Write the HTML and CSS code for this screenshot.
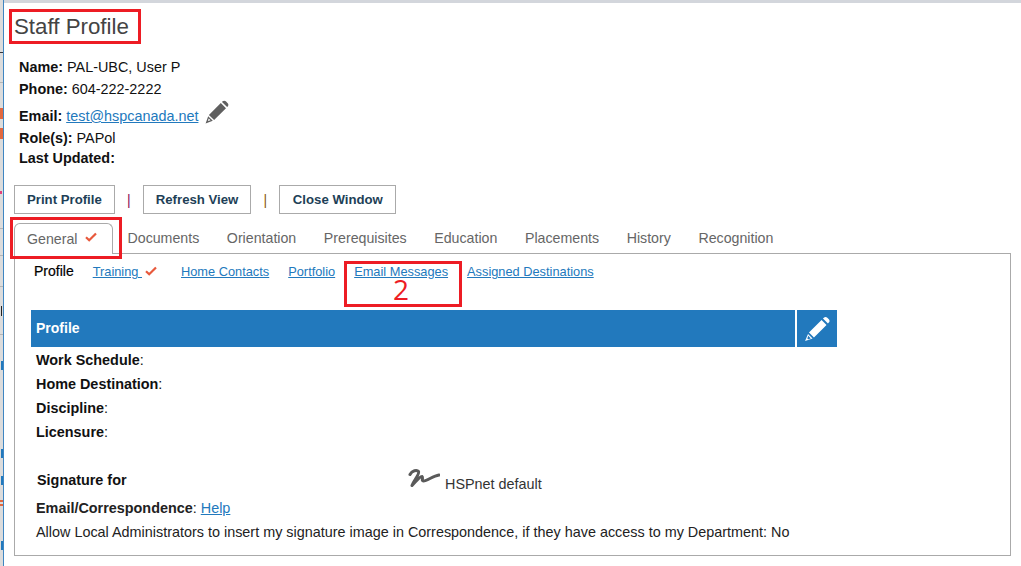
FILE: index.html
```html
<!DOCTYPE html>
<html lang="en">
<head>
<meta charset="utf-8">
<title>Staff Profile</title>
<link rel="stylesheet" href="styles.css">
</head>
<body>
<div class="desktop">
  <div class="backdrop"></div>
  <main class="window">
    <h1 class="title">Staff Profile</h1>
    <div class="info">
      <p class="info-line name"><b>Name:</b> PAL-UBC, User P</p>
      <p class="info-line phone"><b>Phone:</b> 604-222-2222</p>
      <p class="info-line email"><b>Email:</b> <a href="#">test@hspcanada.net</a>
        <svg class="edit-dark" viewBox="0 0 24 24"><path fill="#5f5f5f" fill-rule="evenodd" d="M3.900 14.900 15.800 3l5.200 5.200L9.100 20.100zM3.200 16.200l4.600 4.600L.6 23.400zM3.700 18.400l-.8 2.700.0 .0 2.700-.8zM17 1.900l.6-.6c.9-.9 2.300-.9 3.200 0l1.900 1.900c.9.9.9 2.300 0 3.200l-.6.6z"/></svg>
      </p>
      <p class="info-line role"><b>Role(s):</b> PAPol</p>
      <p class="info-line updated"><b>Last Updated:</b></p>
    </div>
    <div class="actions">
      <button class="btn">Print Profile</button><span class="sep sep-a">|</span>
      <button class="btn">Refresh View</button><span class="sep sep-b">|</span>
      <button class="btn btn-close">Close Window</button>
    </div>
    <nav class="tabs">
      <a class="tab active" href="#">General <svg class="check" viewBox="0 0 12 10"><path d="M1 5.200 4.200 8.300 11 1.500" fill="none" stroke="#e8593c" stroke-width="2.200"/></svg></a>
      <a class="tab" href="#">Documents</a>
      <a class="tab" href="#">Orientation</a>
      <a class="tab" href="#">Prerequisites</a>
      <a class="tab" href="#">Education</a>
      <a class="tab" href="#">Placements</a>
      <a class="tab" href="#">History</a>
      <a class="tab" href="#">Recognition</a>
    </nav>
    <section class="panel">
      <nav class="subnav">
        <span class="sub current">Profile</span>
        <span class="sub training"><a href="#">Training&nbsp;</a><svg class="check" viewBox="0 0 12 10"><path d="M1 5.200 4.200 8.300 11 1.500" fill="none" stroke="#e8593c" stroke-width="2.200"/></svg></span>
        <a class="sub" href="#">Home Contacts</a>
        <a class="sub" href="#">Portfolio</a>
        <a class="sub" href="#">Email Messages</a>
        <a class="sub" href="#">Assigned Destinations</a>
      </nav>
      <div class="bar">
        <div class="bar-title">Profile</div>
        <div class="bar-edit">
          <svg class="edit-light" viewBox="0 0 24 24"><path fill="#fff" fill-rule="evenodd" d="M4.600 15.200 16.200 3.600l4.600 4.600L9.200 19.800zM3.700 16.500l4.200 4.200L1 23zM3.900 18.300l-.8 2.500.7.700 2.500-.8zM17.500 2.300l.8-.8c.9-.9 2.300-.9 3.200 0l1.400 1.400c.9.9.9 2.300 0 3.200l-.8.8z"/></svg>
        </div>
      </div>
      <dl class="fields">
        <div class="field"><b>Work Schedule</b>:</div>
        <div class="field"><b>Home Destination</b>:</div>
        <div class="field"><b>Discipline</b>:</div>
        <div class="field"><b>Licensure</b>:</div>
      </dl>
      <div class="signature">
        <b class="sig-label">Signature for</b>
        <div class="sig-value">
          <svg class="sig-mark" viewBox="0 0 32 20"><path d="M2 6.500C4 2.500 9 1.500 10.500 3.500 12 6 5.500 13 4 17.500 8 13 12.500 8 14 8.500 15.500 9.500 13 13 15.500 13 19 13 25 8 31 7" fill="none" stroke="#5a5a5a" stroke-width="3" stroke-linecap="round" stroke-linejoin="round"/></svg>
          <span class="sig-name">HSPnet default</span>
        </div>
      </div>
      <p class="line corr"><b>Email/Correspondence</b>: <a href="#">Help</a></p>
      <p class="line allow">Allow Local Administrators to insert my signature image in Correspondence, if they have access to my Department: No</p>
    </section>
    <div class="mark mark-title"></div>
    <div class="mark mark-tab"></div>
    <div class="mark mark-sub"><span class="mark-num">2</span></div>
  </main>
</div>
</body>
</html>
```
FILE: styles.css
```css
* { box-sizing: border-box; }
html, body { margin: 0; height: 100%; overflow: hidden; }
body { background: #fff; font-family: "Liberation Sans", Arial, sans-serif; color: #111; }
a { color: #2279bd; }

.desktop { display: flex; width: 1021px; height: 566px; }
.backdrop {
  flex: 0 0 4px;
  background:
    linear-gradient(#33343a, #33343a) 0 52px / 3px 1px no-repeat,
    linear-gradient(#b5b5b5, #b5b5b5) 0 82px / 3px 1px no-repeat,
    linear-gradient(#e2683f, #e2683f) 0 108px / 3px 11px no-repeat,
    linear-gradient(#e2683f, #e2683f) 0 128px / 3px 11px no-repeat,
    linear-gradient(#e2417a, #e2417a) 0 191px / 2px 3px no-repeat,
    linear-gradient(#b5b5b5, #b5b5b5) 0 228px / 3px 1px no-repeat,
    linear-gradient(#b5b5b5, #b5b5b5) 0 255px / 3px 1px no-repeat,
    linear-gradient(#b5b5b5, #b5b5b5) 0 286px / 3px 1px no-repeat,
    linear-gradient(#222, #222) 1px 306px / 1px 10px no-repeat,
    linear-gradient(#b5b5b5, #b5b5b5) 0 334px / 3px 1px no-repeat,
    linear-gradient(#2279bd, #2279bd) 1px 361px / 2px 9px no-repeat,
    linear-gradient(#2279bd, #2279bd) 1px 449px / 2px 9px no-repeat,
    linear-gradient(#2279bd, #2279bd) 1px 476px / 2px 9px no-repeat,
    linear-gradient(#e2683f, #e2683f) 0 500px / 3px 2px no-repeat,
    linear-gradient(#e2683f, #e2683f) 0 504px / 3px 2px no-repeat,
    linear-gradient(#2279bd, #2279bd) 1px 541px / 2px 9px no-repeat,
    #dcdcdc;
  border-right: 1px solid #3f86c2;
}
.window { position: relative; flex: 1; padding: 3px 10px 0 10px; border-top: 3px solid #d3d6dc; }

.title { margin: 6px 0 0; height: 30px; font-size: 22.300px; line-height: 30px; font-weight: 400; color: #444; }

.info { margin: 14px 0 0 5px; font-size: 14.400px; }
.info-line { margin: 0; height: 22px; line-height: 22px; }
.info-line.email { display: flex; align-items: center; gap: 4px; height: 27px; padding-top: 5px; line-height: 22px; }
.info-line.updated { height: 18px; line-height: 18px; }
.edit-dark { width: 24px; height: 24px; margin-left: 3px; margin-top: -9px; }

.actions { display: flex; align-items: center; margin-top: 18px; }
.btn {
  height: 29px; padding: 0 12px; background: #fff; border: 1px solid #aaa; border-radius: 0;
  font: 700 13.200px "Liberation Sans", Arial, sans-serif; color: #1e3f57;
}
.btn-close { width: 117px; }
.sep { width: 28px; text-align: center; font-size: 14px; }
.sep-a { color: #8a1253; }
.sep-b { color: #8a5a10; }

.tabs { display: flex; align-items: flex-end; height: 31px; margin-top: 9px; position: relative; z-index: 1; }
.tab { display: block; height: 31px; line-height: 30px; padding: 0 13.800px; font-size: 14.200px; color: #666; text-decoration: none; white-space: nowrap; }
.tab:nth-child(2) { padding-left: 13.500px; }
.tab.active { width: 99px; margin-right: 1px; padding: 0 12px; background: #fff; border: 1px solid #aaa; border-bottom: 0; border-radius: 6px 6px 0 0; }
.check { width: 12px; height: 10px; }
.tab .check { margin-left: 4px; position: relative; top: -2px; }

.panel { height: 303px; margin-top: -1px; padding: 0 16px; border: 1px solid #aaa; }
.subnav { display: flex; gap: 19px; height: 56px; padding-left: 3px; font-size: 12.800px; line-height: 35px; }
.sub { white-space: nowrap; }
.training { margin-right: 5px; }
.training .check { margin-left: 3px; }
.current { color: #000; font-size: 14px; -webkit-text-stroke: .2px #000; }

.bar { display: flex; gap: 2px; width: 806px; height: 37px; }
.bar-title { flex: 1; padding-left: 5px; background: #2279bd; color: #fff; font-size: 14px; font-weight: 700; line-height: 37px; }
.bar-edit { flex: 0 0 40px; display: flex; align-items: center; justify-content: center; background: #2279bd; }
.edit-light { width: 26px; height: 26px; }

.fields { margin: 1px 0 0 5px; font-size: 14.400px; }
.field { height: 24px; line-height: 24px; }

.signature { display: flex; margin: 12px 0 0 6px; height: 40px; font-size: 14.400px; }
.sig-label { width: 371px; line-height: 24px; padding-top: 12px; }
.sig-value { display: flex; align-items: flex-start; padding-top: 12px; }
.sig-mark { width: 32px; height: 20px; }
.sig-name { margin: 8px 0 0 5px; line-height: 16px; color: #333; }

.line { margin: 0 0 0 5px; height: 24px; line-height: 24px; font-size: 14.400px; color: #222; }

.mark { position: absolute; border: 3px solid #ed1c24; }
.mark-title { left: 5px; top: 6px; width: 132px; height: 35px; }
.mark-tab { left: 6px; top: 214px; width: 112px; height: 42px; }
.mark-sub { left: 340px; top: 258px; width: 118px; height: 46px; padding-right: 4px; text-align: center; }
.mark-num { display: block; color: #ed1c24; font: 28px/22px "Open Sans", sans-serif; margin-top: 14px; }
```
